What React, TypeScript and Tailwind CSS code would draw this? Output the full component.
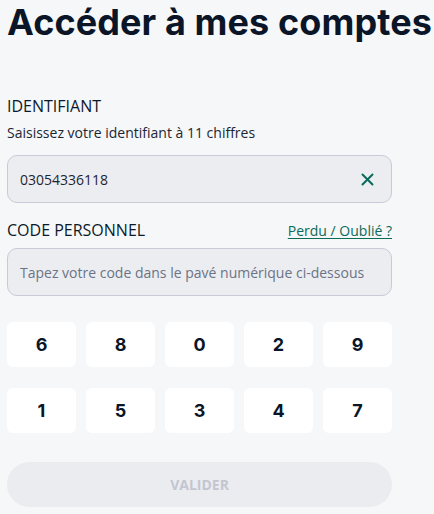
import { useState } from "react";

const KEYS = [
  ["6", "8", "0", "2", "9"],
  ["1", "5", "3", "4", "7"],
];

function ClearIcon() {
  return (
    <svg width="13" height="13" viewBox="0 0 13 13" fill="none">
      <path
        d="M1.5 1.5l10 10M11.5 1.5l-10 10"
        stroke="#0b6b5a"
        strokeWidth="2"
        strokeLinecap="round"
      />
    </svg>
  );
}

export default function App() {
  const [id, setId] = useState("03054336118");
  const [code, setCode] = useState("");

  return (
    <div className="min-h-screen bg-[#f6f7f9] px-[7px] font-['Open_Sans',sans-serif] text-[#0b1a2a]">
      <h1 className="-mr-[7px] font-['Inter',sans-serif] text-[36px] font-bold leading-[44px] tracking-[0.1px] whitespace-nowrap text-[#0a1628]">
        Accéder à mes comptes
      </h1>

      <div className="w-[385px] mt-[51px]">
        <label className="block text-[16px] leading-[22px] text-[#0b1a2a]">IDENTIFIANT</label>
        <p className="mt-[6px] text-[14px] leading-5 text-[#1c2633]">
          Saisissez votre identifiant à 11 chiffres
        </p>

        <div className="mt-[12px] flex h-[48px] items-center rounded-[10px] border border-[#c7cbd8] bg-[#ecedf1] pl-[12px] pr-[17px]">
          <input
            value={id}
            onChange={(e) => setId(e.target.value)}
            className="flex-1 bg-transparent text-[14px] text-[#1c2633] outline-none"
          />
          <button type="button" onClick={() => setId("")} className="flex items-center">
            <ClearIcon />
          </button>
        </div>

        <div className="mt-[16px] flex items-end justify-between">
          <label className="text-[16px] leading-[22px] text-[#0b1a2a]">CODE PERSONNEL</label>
          <a href="#" className="text-[14px] leading-5 text-[#0b6b5a] underline underline-offset-2">
            Perdu / Oublié ?
          </a>
        </div>

        <div className="mt-[7px] flex h-[48px] items-center rounded-[10px] border border-[#c7cbd8] bg-[#ecedf1] px-[12px]">
          <input
            value={code}
            readOnly
            placeholder="Tapez votre code dans le pavé numérique ci-dessous"
            className="flex-1 bg-transparent text-[14px] text-[#1c2633] placeholder:text-[#6b7385] outline-none"
          />
        </div>

        <div className="mt-[26px] flex flex-col gap-[21px]">
          {KEYS.map((row, i) => (
            <div key={i} className="grid grid-cols-5 gap-[10px]">
              {row.map((k) => (
                <button
                  key={k}
                  type="button"
                  onClick={() => setCode((c) => (c.length < 6 ? c + "•" : c))}
                  className="h-[45px] rounded-[6px] bg-white font-['Inter',sans-serif] text-[18px] font-bold text-[#0a1628]"
                >
                  {k}
                </button>
              ))}
            </div>
          ))}
        </div>

        <button
          type="button"
          disabled
          className="mt-[29px] h-[45px] w-full rounded-full bg-[#ebecf0] text-[14px] font-bold text-[#c3c6d1]"
        >
          VALIDER
        </button>
      </div>
    </div>
  );
}
